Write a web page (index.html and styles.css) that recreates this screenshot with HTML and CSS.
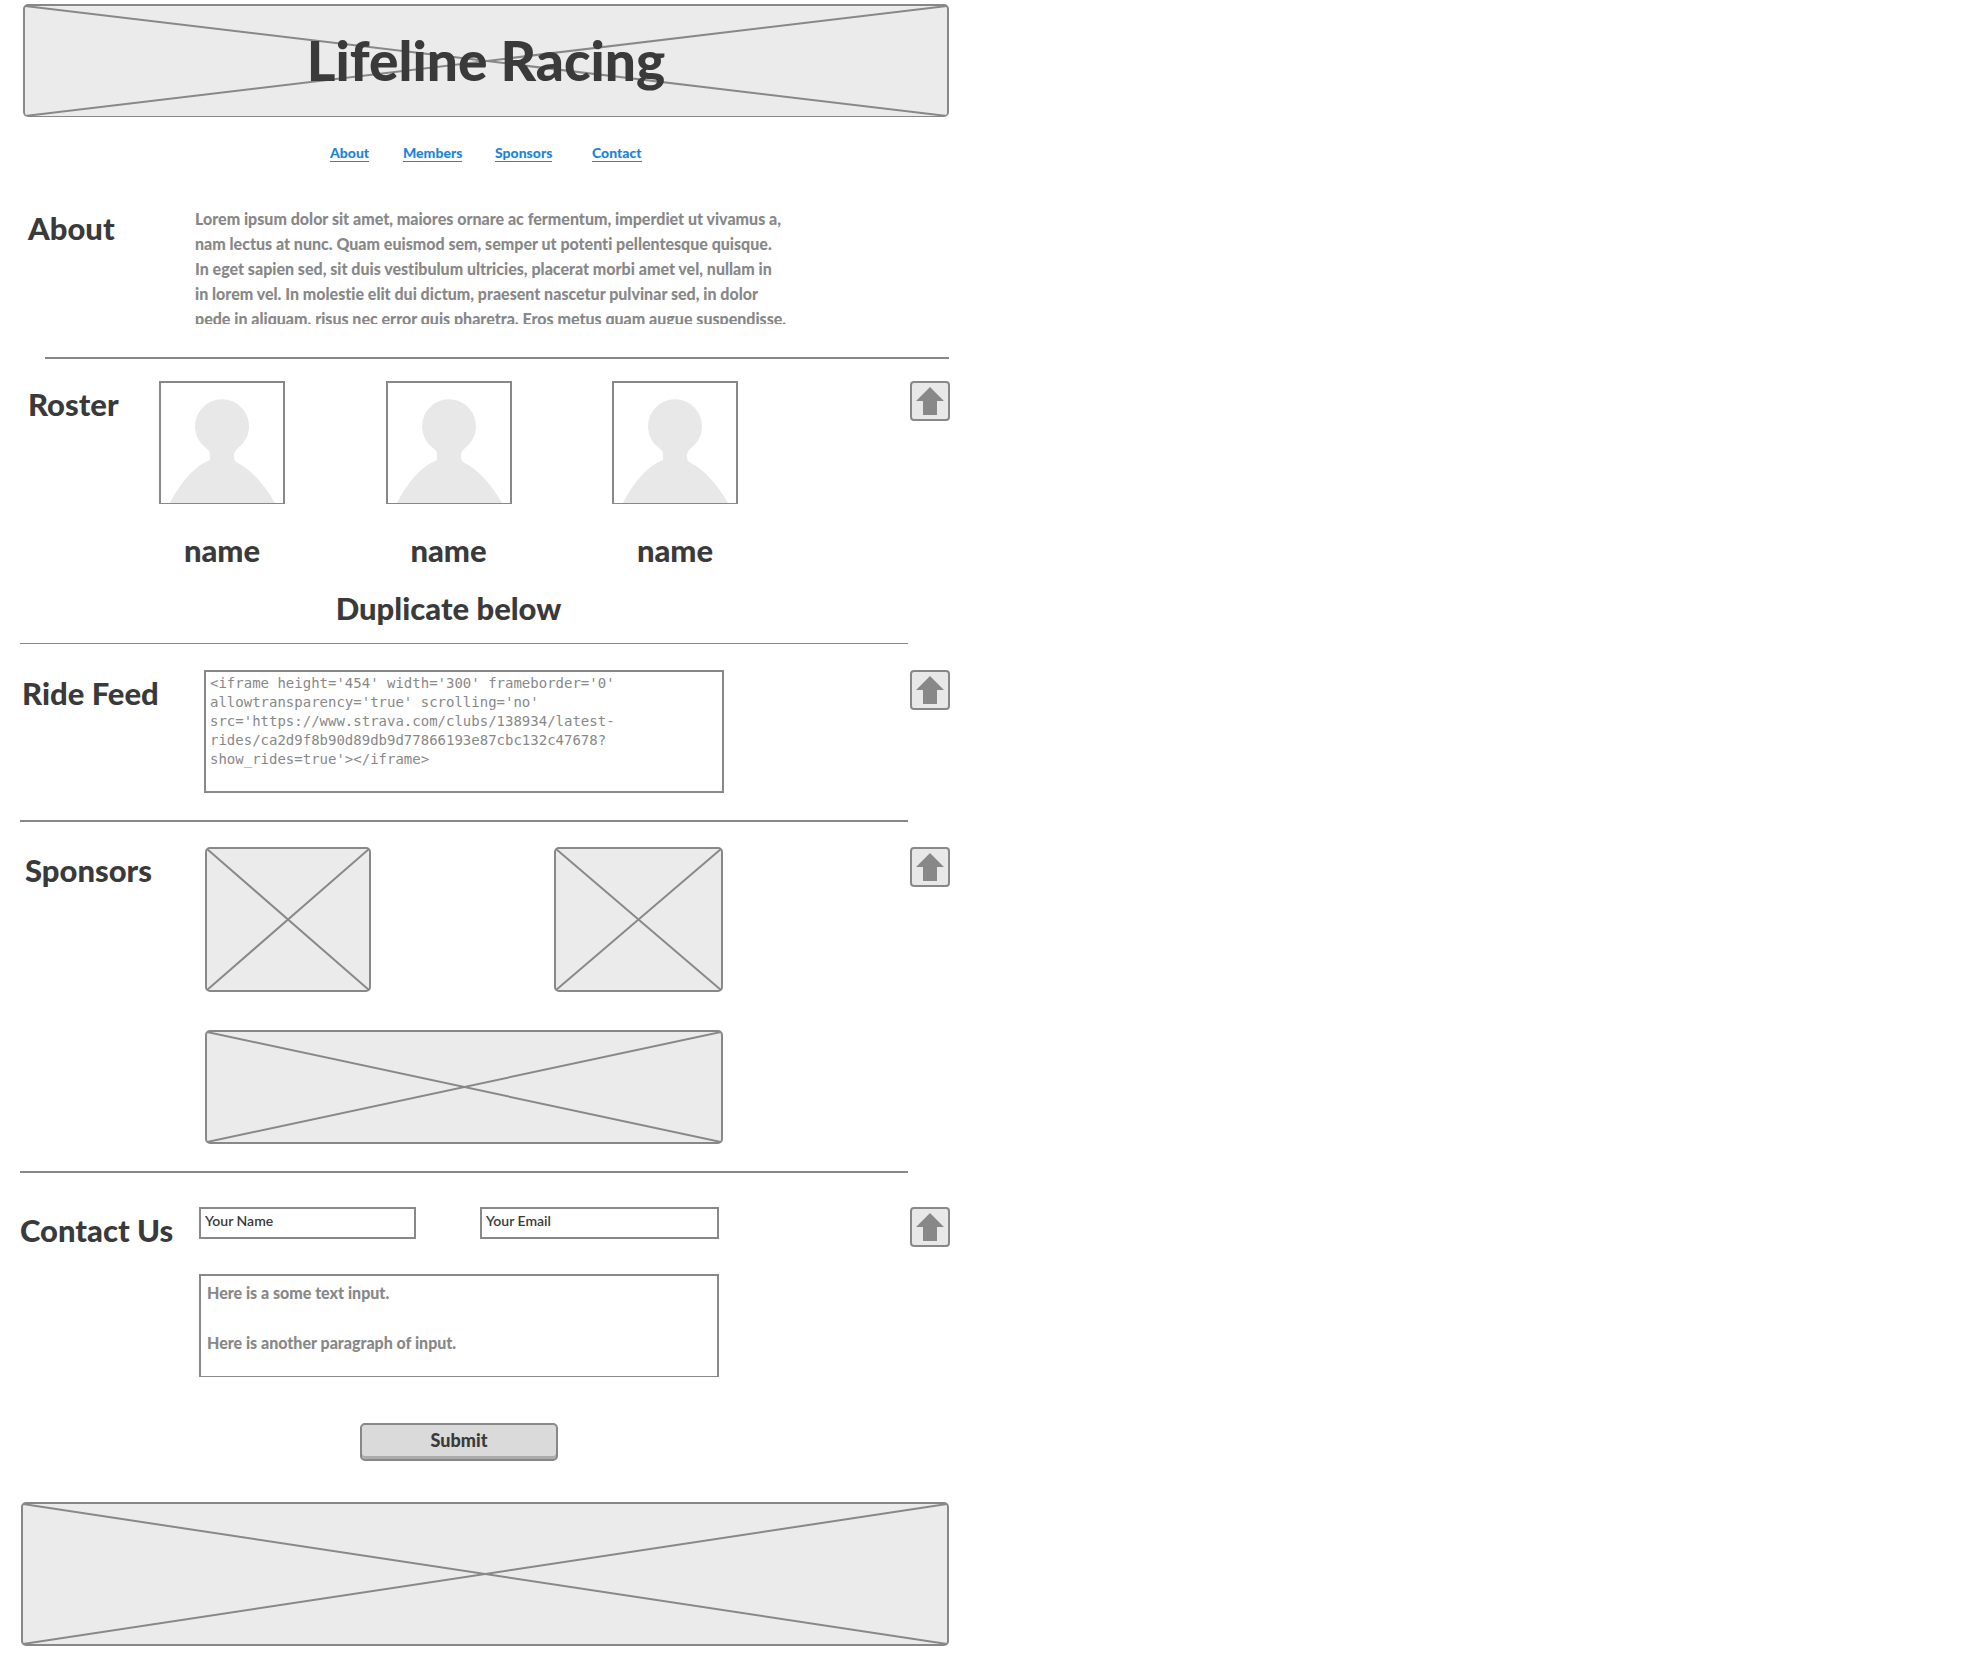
FILE: index.html
```html
<!DOCTYPE html>
<html lang="en">
<head>
<meta charset="utf-8">
<title>Lifeline Racing</title>
<link rel="stylesheet" href="styles.css">
</head>
<body>
<svg class="symbols" aria-hidden="true">
  <symbol id="person" viewBox="0 0 122 120">
    <path d="M9 120C18 103 31 84 49 77V71C49 68 47 67 45 65A27 27 0 1 1 77 65C75 67 73 69 73 72V74Q73 77 75 79C91 87 103 101 114 120Z"/>
  </symbol>
  <symbol id="arrow-up" viewBox="0 0 36 36">
    <path d="M18 4L32 18H25V32H11V18H4Z"/>
  </symbol>
</svg>

<div class="page" id="top">
  <header class="placeholder banner">
    <svg class="cross" aria-hidden="true"><line x1="0" y1="0" x2="100%" y2="100%"/><line x1="0" y1="100%" x2="100%" y2="0"/></svg>
    <h1 class="title">Lifeline Racing</h1>
  </header>

  <nav class="nav">
    <a href="#about">About</a>
    <a href="#roster">Members</a>
    <a href="#sponsors">Sponsors</a>
    <a href="#contact">Contact</a>
  </nav>

  <main>
    <section class="section about" id="about">
      <h2 class="heading">About</h2>
      <p class="intro">Lorem ipsum dolor sit amet, maiores ornare ac fermentum, imperdiet ut vivamus a,<br>nam lectus at nunc. Quam euismod sem, semper ut potenti pellentesque quisque.<br>In eget sapien sed, sit duis vestibulum ultricies, placerat morbi amet vel, nullam in<br>in lorem vel. In molestie elit dui dictum, praesent nascetur pulvinar sed, in dolor<br>pede in aliquam, risus nec error quis pharetra. Eros metus quam augue suspendisse,</p>
    </section>
    <hr class="rule rule-wide">

    <section class="section roster" id="roster">
      <h2 class="heading">Roster</h2>
      <div class="roster-body">
        <div class="members">
          <figure class="member"><svg class="portrait"><use href="#person"/></svg><figcaption>name</figcaption></figure>
          <figure class="member"><svg class="portrait"><use href="#person"/></svg><figcaption>name</figcaption></figure>
          <figure class="member"><svg class="portrait"><use href="#person"/></svg><figcaption>name</figcaption></figure>
        </div>
        <p class="note">Duplicate below</p>
      </div>
      <a class="to-top" href="#top" aria-label="Back to top"><svg><use href="#arrow-up"/></svg></a>
    </section>
    <hr class="rule rule-thin">

    <section class="section feed" id="feed">
      <h2 class="heading"><label for="feed-code">Ride Feed</label></h2>
      <textarea class="box code" id="feed-code" spellcheck="false">&lt;iframe height='454' width='300' frameborder='0'
allowtransparency='true' scrolling='no'
src='https://www.strava.com/clubs/138934/latest-
rides/ca2d9f8b90d89db9d77866193e87cbc132c47678?
show_rides=true'&gt;&lt;/iframe&gt;</textarea>
      <a class="to-top" href="#top" aria-label="Back to top"><svg><use href="#arrow-up"/></svg></a>
    </section>
    <hr class="rule">

    <section class="section sponsors" id="sponsors">
      <h2 class="heading">Sponsors</h2>
      <div class="logos">
        <div class="placeholder logo"><svg class="cross" aria-hidden="true"><line x1="0" y1="0" x2="100%" y2="100%"/><line x1="0" y1="100%" x2="100%" y2="0"/></svg></div>
        <div class="placeholder logo"><svg class="cross" aria-hidden="true"><line x1="0" y1="0" x2="100%" y2="100%"/><line x1="0" y1="100%" x2="100%" y2="0"/></svg></div>
        <div class="placeholder logo-wide"><svg class="cross" aria-hidden="true"><line x1="0" y1="0" x2="100%" y2="100%"/><line x1="0" y1="100%" x2="100%" y2="0"/></svg></div>
      </div>
      <a class="to-top" href="#top" aria-label="Back to top"><svg><use href="#arrow-up"/></svg></a>
    </section>
    <hr class="rule">

    <section class="section contact" id="contact">
      <h2 class="heading">Contact Us</h2>
      <form class="form">
        <input class="box field" type="text" value="Your Name" aria-label="Your Name">
        <input class="box field" type="text" value="Your Email" aria-label="Your Email">
        <textarea class="box message" aria-label="Message">Here is a some text input.

Here is another paragraph of input.</textarea>
        <button class="submit" type="button">Submit</button>
      </form>
      <a class="to-top" href="#top" aria-label="Back to top"><svg><use href="#arrow-up"/></svg></a>
    </section>
  </main>

  <footer class="placeholder footer">
    <svg class="cross" aria-hidden="true"><line x1="0" y1="0" x2="100%" y2="100%"/><line x1="0" y1="100%" x2="100%" y2="0"/></svg>
  </footer>
</div>
</body>
</html>
```

FILE: styles.css
```css
:root {
  --line: #888;
  --fill: #ebebeb;
  --ink: #3a3a3a;
  --link: #1e84d8;
}

* { box-sizing: border-box; }

body {
  margin: 0;
  background: #fff;
  color: var(--ink);
  font-family: Lato, "Open Sans", sans-serif;
  font-variant-ligatures: none;
}

.symbols { display: none; }

.page {
  max-width: 950px;
  padding: 4px 0 20px 20px;
}

h1, h2, p, figure { margin: 0; }

/* Crossed image placeholders */
.placeholder {
  display: grid;
  border: 2px solid var(--line);
  border-radius: 5px;
  background: var(--fill);
}

.cross {
  grid-area: 1 / 1;
  width: 100%;
  height: 100%;
  stroke: var(--line);
  stroke-width: 2;
}

.banner {
  height: 113px;
  margin: 0 1px 0 3px;
  border-bottom-width: 1px;
}

.title {
  grid-area: 1 / 1;
  place-self: center;
  padding-bottom: 2px;
  font-size: 55px;
  line-height: 64px;
  font-weight: 900;
}

.footer {
  height: 144px;
  margin: 41px 1px 0;
}

/* Navigation */
.nav {
  display: grid;
  grid-template-columns: 73px 92px 97px auto;
  justify-items: start;
  margin-top: 28px;
  padding-left: 310px;
}

.nav a {
  border-bottom: 1px solid var(--link);
  color: var(--link);
  font-size: 14px;
  line-height: 16px;
  font-weight: 900;
  text-decoration: none;
}

/* Sections */
.section {
  display: grid;
  grid-template-columns: var(--label) minmax(0, var(--content)) 1fr;
  align-items: start;
}

.heading {
  padding: 3px 0 0 2px;
  font-size: 31px;
  line-height: 40px;
  font-weight: 900;
  white-space: nowrap;
}

.about .heading, .roster .heading { padding-left: 8px; }
.sponsors .heading { padding-left: 5px; }
.contact .heading { padding-left: 0; }

.rule {
  height: 2px;
  margin: 27px 42px 0 0;
  border: 0;
  background: var(--line);
}

.rule-wide { margin: 33px 1px 0 25px; }
.rule-thin { height: 1px; margin-top: 15px; }

.to-top {
  justify-self: end;
  width: 40px;
  height: 40px;
  border: 2px solid var(--line);
  border-radius: 4px;
  background: #e8e8e8;
}

.to-top svg {
  display: block;
  width: 36px;
  height: 36px;
  fill: var(--line);
}

.about {
  --label: 175px;
  --content: 604px;
  margin-top: 43px;
}

.intro {
  height: 119px;
  padding-top: 1px;
  overflow: hidden;
  color: var(--line);
  font-size: 16px;
  line-height: 25px;
  font-weight: 900;
  white-space: nowrap;
}

.roster {
  --label: 139px;
  --content: 579px;
  margin-top: 22px;
}

.members {
  display: flex;
  justify-content: space-between;
}

.member { text-align: center; }

.portrait {
  display: block;
  width: 126px;
  height: 123px;
  border: 2px solid var(--line);
  border-bottom-width: 1px;
  fill: #e8e8e8;
}

.member figcaption {
  margin-top: 26px;
}

.member figcaption, .note {
  font-size: 31px;
  line-height: 40px;
  font-weight: 900;
}

.note {
  margin-top: 18px;
  text-align: center;
}

.feed {
  --label: 184px;
  --content: 520px;
  margin-top: 26px;
}

.box {
  display: block;
  margin: 0;
  border: 2px solid var(--line);
  border-radius: 0;
  background: #fff;
  resize: none;
  outline: 0;
  overflow: hidden;
}

.code {
  width: 100%;
  height: 123px;
  padding: 2px 4px;
  color: var(--line);
  font: 14px/19px "DejaVu Sans Mono", monospace;
}

.sponsors {
  --label: 185px;
  --content: 518px;
  margin-top: 25px;
}

.logos {
  display: grid;
  grid-template-columns: 166px 169px;
  grid-template-rows: 145px 114px;
  justify-content: space-between;
  row-gap: 38px;
}

.logo-wide { grid-column: 1 / -1; }

.contact {
  --label: 179px;
  --content: 520px;
  margin-top: 34px;
}

.form {
  display: grid;
  grid-template-columns: 217px 239px;
  justify-content: space-between;
}

.field {
  width: 100%;
  height: 32px;
  padding: 0 4px 5px;
  color: var(--ink);
  font: 600 14px/20px Lato, sans-serif;
}

.message {
  grid-column: 1 / -1;
  width: 100%;
  height: 103px;
  margin-top: 35px;
  padding: 4px 6px;
  border-bottom-width: 1px;
  color: var(--line);
  font: 900 16px/25px Lato, sans-serif;
}

.submit {
  grid-column: 1 / -1;
  justify-self: center;
  width: 198px;
  height: 38px;
  margin-top: 46px;
  padding: 0 0 4px;
  border: 2px solid var(--line);
  border-radius: 5px;
  background: #dadada;
  box-shadow: inset 0 -3px #acacac;
  color: var(--ink);
  font: 900 18px/24px Lato, sans-serif;
}
```
